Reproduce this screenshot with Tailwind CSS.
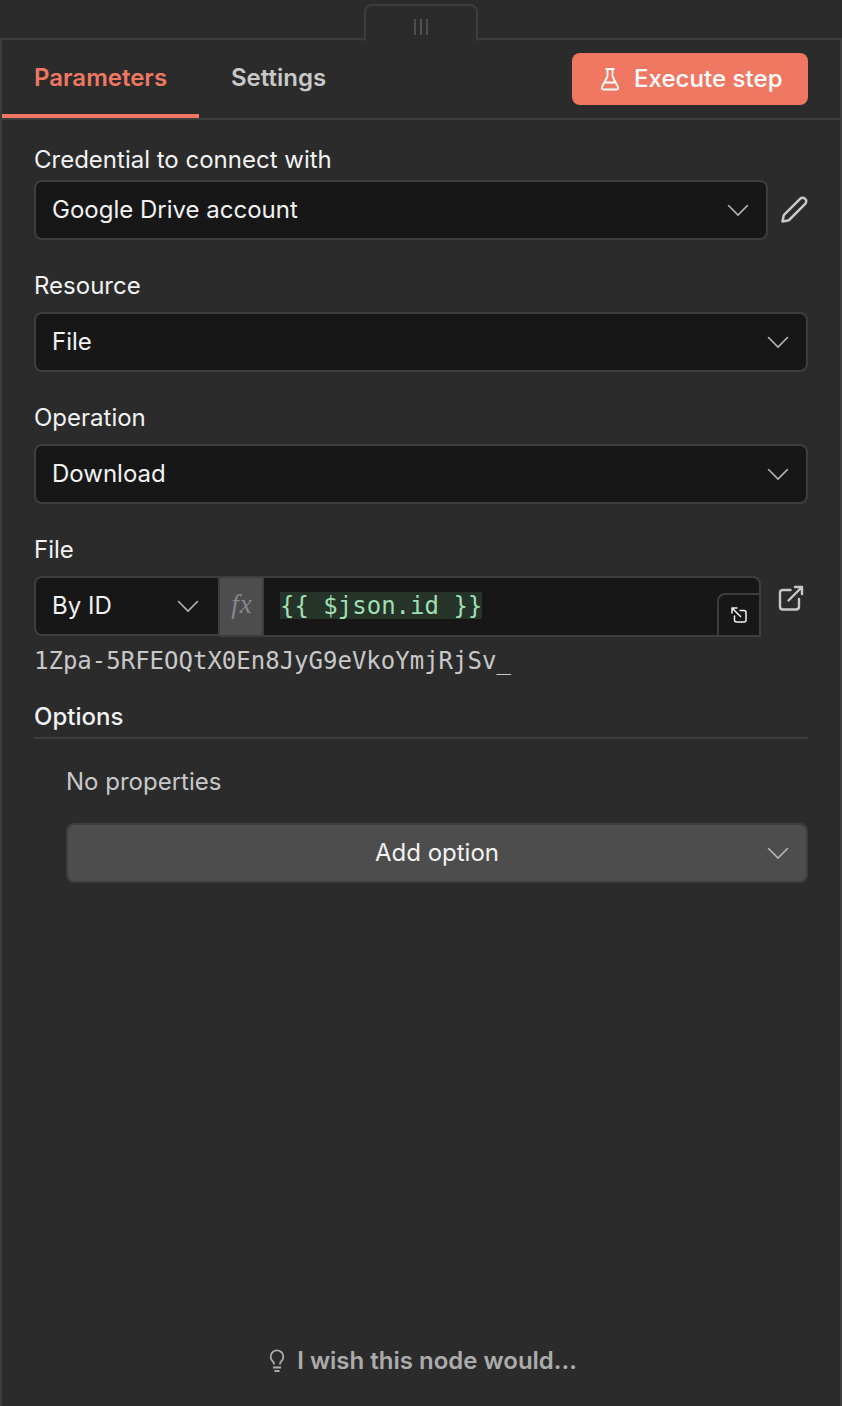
<!DOCTYPE html>
<html lang="en">
<head>
    <meta charset="UTF-8">
    <meta name="viewport" content="width=device-width, initial-scale=1.0">
    <title>Google Drive - Parameters</title>
    <script src="https://cdn.jsdelivr.net/npm/@tailwindcss/browser@4"></script>
</head>
<body class="bg-[#2b2b2b] font-['Inter',sans-serif] text-2xl text-[#f2f2f2]">
    <div class="relative w-[842px] h-[1406px] pt-[38px] flex flex-col overflow-hidden">
        <!-- Drag handle -->
        <div class="absolute left-[364px] top-1 w-[114px] h-[37px] bg-[#2b2b2b] border-2 border-b-0 border-[#3d3d3d] rounded-t-[8px] flex justify-center gap-1 pt-[13px]">
            <div class="w-[2px] h-4 bg-[#4d4d4d]"></div>
            <div class="w-[2px] h-4 bg-[#525252]"></div>
            <div class="w-[2px] h-4 bg-[#4d4d4d]"></div>
        </div>

        <div class="flex-1 flex flex-col border-2 border-b-0 border-[#3d3d3d]">
            <!-- Tabs -->
            <header class="h-20 shrink-0 flex justify-between border-b-2 border-[#3d3d3d] pr-8">
                <nav class="flex font-semibold">
                    <div class="w-[197px] h-[78px] pl-8 leading-[76px] text-[#f07863] border-b-4 border-[#f07863]">Parameters</div>
                    <div class="pl-8 leading-[76px] text-[#c8c8c8]">Settings</div>
                </nav>
                <button class="mt-[13px] w-[236px] h-[52px] rounded-[8px] bg-[#f07863] text-white font-medium flex items-center pl-7 tracking-[0.05px]">
                    <svg class="w-5 h-6 mr-[14px]" viewBox="0 0 20 24" fill="none" stroke="currentColor" stroke-width="1.8" stroke-linejoin="round">
                        <path d="M5.500 2h9M7.500 2v7.500L2.200 19.500Q1 22.500 3.500 22.500h13Q19 22.500 17.800 19.500L12.500 9.500V2M4.500 15.500h11"/>
                    </svg>
                    Execute step
                </button>
            </header>

            <main class="px-8">
                <!-- Credential -->
                <label class="block h-[60px] pt-5 leading-10">Credential to connect with</label>
                <div class="flex items-center">
                    <div class="w-[734px] h-[60px] flex items-center justify-between pl-4 pr-4 bg-[#171717] border-2 border-[#3d3d3d] rounded-[8px]">
                        <span>Google Drive account</span>
                        <svg class="w-6 h-6" viewBox="0 0 24 24" fill="none" stroke="#b5b5b5" stroke-width="1.6" stroke-linecap="round"><path d="M2.500 7.500 12 17 21.500 7.500"/></svg>
                    </div>
                    <svg class="w-7 h-7 ml-3" viewBox="0 0 28 28" fill="none" stroke="#c8c8c8" stroke-width="2.500" stroke-linecap="round" stroke-linejoin="round">
                        <path d="M25.200 2.800a3.600 3.600 0 0 0-5.100 0L4.500 18.400a4 4 0 0 0-.9 1.500L2.500 25.500l5.600-1.100a4 4 0 0 0 1.500-.9L25.200 7.900a3.600 3.600 0 0 0 0-5.100z"/>
                    </svg>
                </div>

                <!-- Resource -->
                <label class="block h-[72px] pt-6 leading-[44px]">Resource</label>
                <div class="h-[60px] flex items-center justify-between pl-4 pr-4 bg-[#171717] border-2 border-[#3d3d3d] rounded-[8px]">
                    <span>File</span>
                    <svg class="w-6 h-6" viewBox="0 0 24 24" fill="none" stroke="#b5b5b5" stroke-width="1.6" stroke-linecap="round"><path d="M2.500 7.500 12 17 21.500 7.500"/></svg>
                </div>

                <!-- Operation -->
                <label class="block h-[72px] pt-6 leading-[44px]">Operation</label>
                <div class="h-[60px] flex items-center justify-between pl-4 pr-4 bg-[#171717] border-2 border-[#3d3d3d] rounded-[8px]">
                    <span>Download</span>
                    <svg class="w-6 h-6" viewBox="0 0 24 24" fill="none" stroke="#b5b5b5" stroke-width="1.6" stroke-linecap="round"><path d="M2.500 7.500 12 17 21.500 7.500"/></svg>
                </div>

                <!-- File locator -->
                <label class="block h-[72px] pt-6 leading-[44px]">File</label>
                <div class="flex h-[61px]">
                    <div class="w-[186px] h-[60px] flex items-center justify-between pl-4 pr-[18px] bg-[#171717] border-2 border-[#3d3d3d] rounded-l-[8px]">
                        <span>By ID</span>
                        <svg class="w-6 h-6" viewBox="0 0 24 24" fill="none" stroke="#b5b5b5" stroke-width="1.6" stroke-linecap="round"><path d="M2.500 7.500 12 17 21.500 7.500"/></svg>
                    </div>
                    <div class="w-[42px] pl-[2px] flex justify-center bg-[#4d4d4d] border-y-2 border-[#3d3d3d] font-['Liberation_Serif',serif] italic text-[27px] tracking-[1px] leading-[52px] text-[#858894]">fx</div>
                    <div class="relative w-[499px] flex items-center pl-4 bg-[#171717] border-2 border-[#3d3d3d] rounded-tr-[8px]">
                        <code class="font-['DejaVu_Sans_Mono',monospace] leading-[27px] h-[27px] -mt-[2px] bg-[#253328] text-[#9fdfb2]"><span class="relative top-px">{{ $json.id }}</span></code>
                        <div class="absolute -right-[2px] -bottom-[2px] w-11 h-11 bg-[#171717] border-2 border-[#3d3d3d] rounded-tl-[8px]">
                            <svg class="w-4 h-4 mt-3 ml-3" viewBox="0 0 16 16" fill="none" stroke="#f2f2f2" stroke-width="1.5" stroke-linecap="round" stroke-linejoin="round">
                                <path d="M1 6V1h5M1 1l8.500 8.500M9 3.500h4q2 0 2 2v7.500q0 2-2 2H5.500q-2 0-2-2V9"/>
                            </svg>
                        </div>
                    </div>
                    <svg class="w-[26px] h-[26px] ml-[17px] mt-[9px]" viewBox="0 0 26 26" fill="none" stroke="#c8c8c8" stroke-width="2.400" stroke-linecap="round" stroke-linejoin="round">
                        <path d="M17 2h7v7M24 2 10.500 15.500M12.500 5H5Q2 5 2 8v13.500q0 3 3 3h13q3 0 3-3V14"/>
                    </svg>
                </div>
                <div class="font-['DejaVu_Sans_Mono',monospace] leading-[48px] text-[#c8c8c8]">1Zpa-5RFEOQtX0En8JyG9eVkoYmjRjSv_</div>

                <!-- Options -->
                <div class="mt-2 h-[46px] leading-[48px] font-medium border-b-2 border-[#3d3d3d]">Options</div>
                <div class="pl-8">
                    <p class="h-[84px] leading-[86px] text-[#c8c8c8]">No properties</p>
                    <button class="relative w-full h-[60px] bg-[#4d4d4d] border-2 border-[#3d3d3d] rounded-[8px] flex items-center justify-center">
                        Add option
                        <svg class="absolute right-4 w-6 h-6" viewBox="0 0 24 24" fill="none" stroke="#b5b5b5" stroke-width="1.6" stroke-linecap="round"><path d="M2.500 7.500 12 17 21.500 7.500"/></svg>
                    </button>
                </div>
            </main>

            <!-- Feedback link -->
            <footer class="mt-auto mb-[25px] pl-1 h-10 flex items-center justify-center text-[#ababab] font-semibold">
                <svg class="w-4 h-6 mr-3" viewBox="0 0 16 24" fill="none" stroke="currentColor" stroke-width="1.8">
                    <path d="M5 15.500Q5 13 3 11.500a6.300 6.300 0 1 1 10 0Q11 13 11 15.500M4 18.500h8M5.500 22h5"/>
                </svg>
                I wish this node would...
            </footer>
        </div>
    </div>
</body>
</html>
